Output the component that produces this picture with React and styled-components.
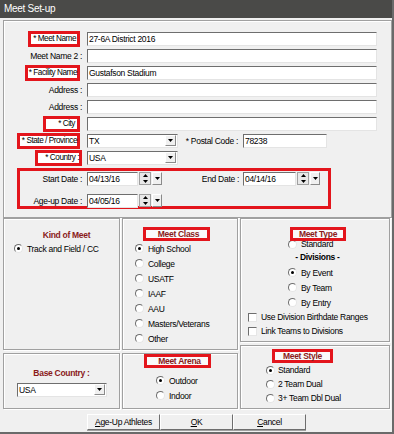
import styled, { createGlobalStyle } from "styled-components";

const FONT = `"Liberation Sans", Arial, sans-serif`;

const GlobalStyle = createGlobalStyle`
  html, body { margin: 0; padding: 0; background: #f0f0f0; }
  body { font-family: ${FONT}; font-size: 8.5px; letter-spacing: -0.3px; color: #000; }
  * { box-sizing: border-box; }
`;

const Window = styled.div`
  width: 394px;
  height: 434px;
  background: #f0f0f0;
  display: flex;
  flex-direction: column;
  border-right: 2px solid #6a6a6a;
  border-bottom: 2px solid #6a6a6a;
  overflow: hidden;
`;

const TitleBar = styled.div`
  height: 18px;
  background: #4a4a48;
  color: #fff;
  font-size: 10px;
  line-height: 18px;
  padding: 0 4px;
`;

const Body = styled.div`
  display: flex;
  flex-direction: column;
  padding: 2px 0 0 3px;
`;

const FormPanel = styled.div`
  height: 198px;
  border: 1px solid #a0a0a0;
  box-shadow: inset 1px 1px 0 #fff, 1px 1px 0 #fff;
  padding: 9px 0 0 1px;
`;

const Row = styled.div`
  display: grid;
  grid-template-columns: 77px ${(p) => p.cols || "290px"};
  column-gap: 5px;
  height: 17px;
  align-items: center;
`;

const Label = styled.div`
  display: flex;
  justify-content: flex-end;
  align-items: center;
  padding-right: ${(p) => p.pr || 0}px;
  white-space: nowrap;
`;

const RedLabel = styled.span`
  display: flex;
  align-items: center;
  justify-content: flex-end;
  width: ${(p) => p.w}px;
  border: 3px solid #e3151c;
  background: #fff;
  height: 16px;
  font-size: 8.2px;
  letter-spacing: -0.45px;
  padding-right: ${(p) => p.pr ?? 1}px;
  white-space: nowrap;
`;

const Field = styled.div`
  width: ${(p) => p.w}px;
  height: 14px;
  background: #fff;
  border: 1px solid;
  border-color: #6e6e6e #e4e4e4 #e4e4e4 #6e6e6e;
  padding-left: 1px;
  line-height: 12px;
  white-space: nowrap;
  overflow: hidden;
`;

const Combo = styled(Field)`
  display: flex;
  justify-content: space-between;
  align-items: center;
  padding-right: 1px;
`;

const ArrowBtn = styled.div`
  width: ${(p) => p.w || 11}px;
  height: ${(p) => p.h || 11}px;
  background: #f0f0f0;
  border: 1px solid;
  border-color: #fff #8a8a8a #8a8a8a #fff;
  display: flex;
  flex-direction: column;
  align-items: center;
  justify-content: center;
  flex-shrink: 0;
`;

const DateBox = styled.div`
  margin: 2px 0 0 12px;
  width: 314px;
  height: 41px;
  border: 3px solid #e3151c;
  padding-top: 1px;
  display: grid;
  grid-template-columns: 67px 75px 81px auto;
  grid-auto-rows: 13px;
  row-gap: 9px;
  align-items: center;
`;

const DateWidget = styled.div`
  display: flex;
  align-items: center;
  gap: 1px;
`;

const Spinner = styled.div`
  width: 12px;
  height: 13px;
  background: #e8e8e8;
  border: 1px solid #a0a0a0;
  display: flex;
  flex-direction: column;
  align-items: center;
  justify-content: space-around;
`;

const Bottom = styled.div`
  display: flex;
  gap: 2px;
`;

const Column = styled.div`
  width: ${(p) => p.w}px;
  display: flex;
  flex-direction: column;
  gap: 3px;
`;

const Group = styled.div`
  height: ${(p) => p.h}px;
  border: 1px solid #a0a0a0;
  box-shadow: inset 1px 1px 0 #fff, 1px 1px 0 #fff;
  padding: ${(p) => p.pt || 0}px 0 0 ${(p) => p.pl || 0}px;
  display: flex;
  flex-direction: column;
`;

const GroupTitle = styled.div`
  color: #8a1a1a;
  font-weight: bold;
  text-align: center;
  line-height: 12px;
`;

const TitleBox = styled.div`
  position: relative;
  z-index: 1;
  align-self: flex-start;
  width: ${(p) => p.w}px;
  margin-left: ${(p) => p.ml || 0}px;
  height: 14px;
  line-height: 8px;
  border: 3px solid #e3151c;
  background: #fafafa;
  color: #8a1a1a;
  font-weight: bold;
  text-align: center;
  padding-left: ${(p) => p.pl || 0}px;
`;

const OptionRow = styled.div`
  display: flex;
  align-items: center;
  gap: ${(p) => p.gap || 4}px;
  height: ${(p) => p.h || 15}px;
  margin-top: ${(p) => p.mt || 0}px;
  margin-left: ${(p) => p.ml || 0}px;
  white-space: nowrap;
`;

const Radio = styled.span`
  width: 9px;
  height: 9px;
  border-radius: 50%;
  background: #fff;
  border: 1px solid;
  border-color: #6e6e6e #e6e6e6 #e6e6e6 #6e6e6e;
  display: flex;
  align-items: center;
  justify-content: center;
  flex-shrink: 0;

  &::after {
    content: "";
    width: 3px;
    height: 3px;
    border-radius: 50%;
    background: ${(p) => (p.on ? "#000" : "transparent")};
  }
`;

const Check = styled.span`
  width: 9px;
  height: 9px;
  background: #fff;
  border: 1px solid;
  border-color: #6e6e6e #e6e6e6 #e6e6e6 #6e6e6e;
  flex-shrink: 0;
`;

const Divisions = styled.div`
  font-weight: bold;
  height: 15px;
  line-height: 15px;
  margin-left: -47px;
  padding-left: 5px;
  text-align: center;
`;

const ButtonRow = styled.div`
  height: 23px;
  display: flex;
  padding: 5px 0 0 84px;
`;

const Button = styled.div`
  width: 73px;
  height: 16px;
  background: #f0f0f0;
  border-top: 1px solid #fff;
  border-left: 1px solid #fff;
  border-right: 1px solid #6e6e6e;
  border-bottom: 1px solid #6e6e6e;
  box-shadow: 0 1px 0 #a0a0a0;
  text-align: center;
  line-height: 14px;
`;

const Down = () => (
  <svg width="5" height="3" viewBox="0 0 5 3">
    <path d="M0 0h5L2.5 3z" fill="#000" />
  </svg>
);

const Up = () => (
  <svg width="5" height="3" viewBox="0 0 5 3">
    <path d="M0 3h5L2.5 0z" fill="#000" />
  </svg>
);

function ComboBox({ w, value }) {
  return (
    <Combo w={w}>
      <span>{value}</span>
      <ArrowBtn>
        <Down />
      </ArrowBtn>
    </Combo>
  );
}

function DatePick({ value }) {
  return (
    <DateWidget>
      <Field w={53}>{value}</Field>
      <Spinner>
        <Up />
        <Down />
      </Spinner>
      <ArrowBtn w={10} h={13}>
        <Down />
      </ArrowBtn>
    </DateWidget>
  );
}

function Option({ on, children, ...rest }) {
  return (
    <OptionRow {...rest}>
      <Radio on={on} />
      <span>{children}</span>
    </OptionRow>
  );
}

const classes = ["High School", "College", "USATF", "IAAF", "AAU", "Masters/Veterans", "Other"];

export default function App() {
  return (
    <>
      <GlobalStyle />
      <Window>
        <TitleBar>Meet Set-up</TitleBar>
        <Body>
          <FormPanel>
            <Row>
              <Label pr={2}><RedLabel w={52}>* Meet Name</RedLabel></Label>
              <Field w={290}>27-6A District 2016</Field>
            </Row>
            <Row>
              <Label>Meet Name 2 :</Label>
              <Field w={290} />
            </Row>
            <Row>
              <Label pr={2}><RedLabel w={55} pr={0}>* Facility Name</RedLabel></Label>
              <Field w={290}>Gustafson Stadium</Field>
            </Row>
            <Row>
              <Label>Address :</Label>
              <Field w={290} />
            </Row>
            <Row>
              <Label>Address :</Label>
              <Field w={290} />
            </Row>
            <Row>
              <Label pr={2}><RedLabel w={37} pr={2}>* City</RedLabel></Label>
              <Field w={290} />
            </Row>
            <Row cols="91px 55px 84px">
              <Label pr={2}><RedLabel w={63} pr={0}>* State / Province</RedLabel></Label>
              <ComboBox w={91} value="TX" />
              <Label>* Postal Code :</Label>
              <Field w={84}>78238</Field>
            </Row>
            <Row cols="91px">
              <Label><RedLabel w={47} pr={0}>* Country :</RedLabel></Label>
              <ComboBox w={91} value="USA" />
            </Row>
            <DateBox>
              <Label pr={5}>Start Date :</Label>
              <DatePick value="04/13/16" />
              <Label pr={4}>End Date :</Label>
              <DatePick value="04/14/16" />
              <Label pr={5}>Age-up Date :</Label>
              <DatePick value="04/05/16" />
            </DateBox>
          </FormPanel>

          <Bottom>
            <Column w={117}>
              <Group h={132} pt={10} pl={10}>
                <GroupTitle>Kind of Meet</GroupTitle>
                <Option on>Track and Field / CC</Option>
              </Group>
              <Group h={56} pt={13}>
                <GroupTitle>Base Country :</GroupTitle>
                <OptionRow mt={3} ml={13}>
                  <ComboBox w={90} value="USA" />
                </OptionRow>
              </Group>
            </Column>

            <Column w={116}>
              <Group h={132} pt={8} pl={12}>
                <TitleBox w={67} ml={8} pl={4}>Meet Class</TitleBox>
                {classes.map((c, i) => (
                  <Option key={c} on={i === 0}>{c}</Option>
                ))}
              </Group>
              <Group h={56} pt={0} pl={33}>
                <TitleBox w={67} ml={-12} pl={4}>Meet Arena</TitleBox>
                <Option on mt={5}>Outdoor</Option>
                <Option>Indoor</Option>
              </Group>
            </Column>

            <Column w={150}>
              <Group h={124} pt={8} pl={47}>
                <TitleBox w={56} ml={2}>Meet Type</TitleBox>
                <Option mt={-3} h={12}>Standard</Option>
                <Divisions>- Divisions -</Divisions>
                <Option on>By Event</Option>
                <Option>By Team</Option>
                <Option>By Entry</Option>
                <OptionRow h={14} ml={-40}>
                  <Check />
                  <span>Use Division Birthdate Ranges</span>
                </OptionRow>
                <OptionRow h={14} ml={-40}>
                  <Check />
                  <span>Link Teams to Divisions</span>
                </OptionRow>
              </Group>
              <Group h={64} pt={3} pl={25}>
                <TitleBox w={61} ml={6}>Meet Style</TitleBox>
                <Option on h={14} gap={3}>Standard</Option>
                <Option h={14} gap={3}>2 Team Dual</Option>
                <Option h={14} gap={3}>3+ Team Dbl Dual</Option>
              </Group>
            </Column>
          </Bottom>

          <ButtonRow>
            <Button><u>A</u>ge-Up Athletes</Button>
            <Button><u>O</u>K</Button>
            <Button><u>C</u>ancel</Button>
          </ButtonRow>
        </Body>
      </Window>
    </>
  );
}
